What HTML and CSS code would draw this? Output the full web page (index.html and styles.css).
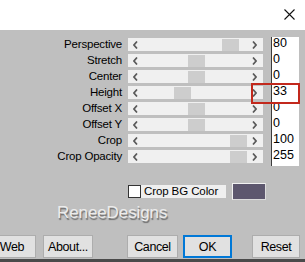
FILE: index.html
```html
<!DOCTYPE html>
<html lang="en">
<head>
  <meta charset="UTF-8">
  <title>Perspective</title>
  <link rel="stylesheet" href="styles.css">
</head>
<body>
  <div class="titlebar">
    <svg class="close" width="11" height="11" viewBox="0 0 11 11">
      <path d="M0.5 0.5 L10.5 10.5 M10.5 0.5 L0.5 10.5" stroke="#111" stroke-width="1.1" fill="none"/>
    </svg>
  </div>

  <div class="panel">
    <div class="sliders">
      <div class="labels">
        <div class="lbl">Perspective</div>
        <div class="lbl">Stretch</div>
        <div class="lbl">Center</div>
        <div class="lbl">Height</div>
        <div class="lbl">Offset X</div>
        <div class="lbl">Offset Y</div>
        <div class="lbl">Crop</div>
        <div class="lbl">Crop Opacity</div>
      </div>
      <div class="tracks">
        <div class="track"><svg class="arr" viewBox="0 0 5 8"><path d="M4 0.5 L1 4 L4 7.5"/></svg><span class="lane"><span class="thumb" style="margin-left:80px"></span></span><svg class="arr" viewBox="0 0 5 8"><path d="M1 0.5 L4 4 L1 7.5"/></svg></div>
        <div class="track"><svg class="arr" viewBox="0 0 5 8"><path d="M4 0.5 L1 4 L4 7.5"/></svg><span class="lane"><span class="thumb" style="margin-left:46px"></span></span><svg class="arr" viewBox="0 0 5 8"><path d="M1 0.5 L4 4 L1 7.5"/></svg></div>
        <div class="track"><svg class="arr" viewBox="0 0 5 8"><path d="M4 0.5 L1 4 L4 7.5"/></svg><span class="lane"><span class="thumb" style="margin-left:46px"></span></span><svg class="arr" viewBox="0 0 5 8"><path d="M1 0.5 L4 4 L1 7.5"/></svg></div>
        <div class="track"><svg class="arr" viewBox="0 0 5 8"><path d="M4 0.5 L1 4 L4 7.5"/></svg><span class="lane"><span class="thumb" style="margin-left:32px"></span></span><svg class="arr" viewBox="0 0 5 8"><path d="M1 0.5 L4 4 L1 7.5"/></svg></div>
        <div class="track"><svg class="arr" viewBox="0 0 5 8"><path d="M4 0.5 L1 4 L4 7.5"/></svg><span class="lane"><span class="thumb" style="margin-left:46px"></span></span><svg class="arr" viewBox="0 0 5 8"><path d="M1 0.5 L4 4 L1 7.5"/></svg></div>
        <div class="track"><svg class="arr" viewBox="0 0 5 8"><path d="M4 0.5 L1 4 L4 7.5"/></svg><span class="lane"><span class="thumb" style="margin-left:46px"></span></span><svg class="arr" viewBox="0 0 5 8"><path d="M1 0.5 L4 4 L1 7.5"/></svg></div>
        <div class="track"><svg class="arr" viewBox="0 0 5 8"><path d="M4 0.5 L1 4 L4 7.5"/></svg><span class="lane"><span class="thumb" style="margin-left:88px"></span></span><svg class="arr" viewBox="0 0 5 8"><path d="M1 0.5 L4 4 L1 7.5"/></svg></div>
        <div class="track"><svg class="arr" viewBox="0 0 5 8"><path d="M4 0.5 L1 4 L4 7.5"/></svg><span class="lane"><span class="thumb" style="margin-left:88px"></span></span><svg class="arr" viewBox="0 0 5 8"><path d="M1 0.5 L4 4 L1 7.5"/></svg></div>
      </div>
      <div class="values">
        <div class="val">80</div>
        <div class="val">0</div>
        <div class="val">0</div>
        <div class="val">33</div>
        <div class="val">0</div>
        <div class="val">0</div>
        <div class="val">100</div>
        <div class="val">255</div>
      </div>
    </div>

    <div class="colorrow">
      <span class="check"></span>
      <span class="checklbl">Crop BG Color</span>
      <span class="swatch"></span>
    </div>

    <div class="brand">ReneeDesigns</div>

    <div class="buttons">
      <button class="btn web">Web</button>
      <button class="btn about">About...</button>
      <button class="btn cancel">Cancel</button>
      <button class="btn ok">OK</button>
      <button class="btn reset">Reset</button>
    </div>
  </div>

  <div class="highlight"></div>
</body>
</html>
```

FILE: styles.css
```css
html, body { margin: 0; padding: 0; }
body { width: 305px; height: 262px; overflow: hidden; background: #bfbfbf; font-family: "Liberation Sans", Arial, sans-serif; position: relative; }

.titlebar { height: 30px; background: #fff; display: flex; justify-content: flex-end; align-items: flex-start; }
.close { margin: 9px 10px 0 0; }

.panel { height: 229px; border-bottom: 3px solid #4a4a4a; display: flex; flex-direction: column; }

.sliders { display: flex; padding-top: 7px; }
.labels { width: 122px; display: flex; flex-direction: column; padding-top: 1px; }
.lbl { height: 16px; line-height: 13px; font-size: 11.5px; text-align: right; color: #000; letter-spacing: -0.2px; }

.tracks { width: 135px; margin-left: 6px; display: flex; flex-direction: column; gap: 3px; padding-top: 1px; }
.track { height: 13px; background: #f0f0f0; display: flex; align-items: center; }
.arr { width: 5px; height: 8px; margin: 0 4px 0 5px; fill: none; stroke: #5a5a5a; stroke-width: 1.7; }
.track .arr:last-child { margin: 0 6px 0 3px; }
.lane { flex: 1; display: flex; height: 13px; }
.thumb { width: 17px; height: 12px; margin-top: 0.5px; background: #cdcdcd; }

.values { width: 27px; margin-left: 8px; background: #fff; border-left: 1px solid #3c3c3c; height: 129px; display: flex; flex-direction: column; }
.val { height: 16px; font-size: 12.5px; line-height: 13px; padding-left: 1px; color: #000; }

.colorrow { display: flex; align-items: center; margin: 16px 0 0 128px; height: 19px; }
.check { width: 11px; height: 11px; background: #fff; border: 1px solid #333; }
.checklbl { background: #efefef; font-size: 11.5px; height: 13px; line-height: 13px; padding: 0 8px 0 3px; letter-spacing: -0.1px; }
.swatch { width: 32px; height: 15px; margin-left: 6px; background: #5d576e; border: 1px solid #f2f2f2; border-right-color: #dcdcdc; border-bottom-color: #dcdcdc; }

.brand { margin: 3px 0 0 57px; font-size: 17px; color: #ececec; letter-spacing: -0.1px; text-shadow: 1px 2px 1px #6c6c6c; height: 21px; line-height: 18px; }

.buttons { display: flex; margin-top: 10px; }
.btn { height: 23px; font-family: "Liberation Sans", Arial, sans-serif; font-size: 12.5px; letter-spacing: -0.4px; color: #000; background: #e1e1e1; border: 1px solid #adadad; padding: 0; border-radius: 0; }
.web { width: 50px; margin-left: -14px; text-align: right; padding-right: 11px; }
.about { width: 50px; margin-left: 7px; }
.cancel { width: 51px; margin-left: 34px; }
.ok { width: 49px; margin-left: 5px; border: 2px solid #0078d7; }
.reset { width: 48px; margin-left: 20px; }

.highlight { position: absolute; left: 251px; top: 83px; width: 45px; height: 17px; border: 2px solid #c2281c; }
```
